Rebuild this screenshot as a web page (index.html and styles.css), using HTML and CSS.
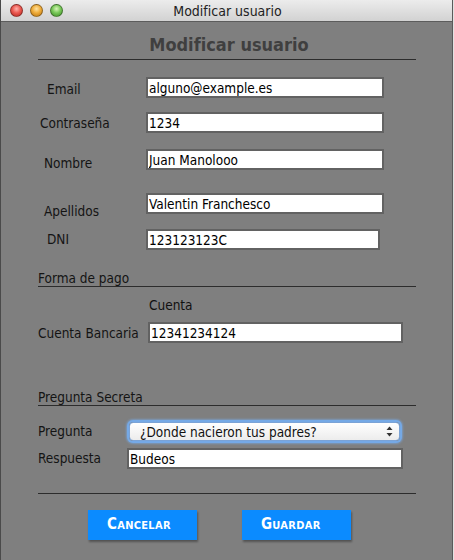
FILE: index.html
```html
<!DOCTYPE html>
<html lang="es">
<head>
  <meta charset="UTF-8">
  <title>Modificar usuario</title>
  <link rel="stylesheet" href="styles.css">
</head>
<body>
  <div class="window">
    <!-- Title bar -->
    <div class="titlebar">
      <div class="lights">
        <span class="light light-close"></span>
        <span class="light light-min"></span>
        <span class="light light-max"></span>
      </div>
      <div class="titlebar-text">Modificar usuario</div>
    </div>

    <div class="form">
      <h1>Modificar usuario</h1>

      <div class="row row-email">
        <label class="lbl lbl-email">Email</label>
        <input class="field" type="text" value="alguno@example.es">
      </div>
      <div class="row row-pass">
        <label class="lbl lbl-pass">Contraseña</label>
        <input class="field" type="text" value="1234">
      </div>
      <div class="row row-nombre">
        <label class="lbl lbl-nombre">Nombre</label>
        <input class="field" type="text" value="Juan Manolooo">
      </div>
      <div class="row row-apellidos">
        <label class="lbl lbl-apellidos">Apellidos</label>
        <input class="field" type="text" value="Valentin Franchesco">
      </div>
      <div class="row row-dni">
        <label class="lbl lbl-dni">DNI</label>
        <input class="field field-dni" type="text" value="123123123C">
      </div>

      <!-- Forma de pago -->
      <div class="section section-pago"><u>Forma de pago</u></div>
      <div class="subtitle">Cuenta</div>
      <div class="row row-cuenta">
        <label class="lbl lbl-cuenta">Cuenta Bancaria</label>
        <input class="field field-cuenta" type="text" value="12341234124">
      </div>

      <!-- Pregunta secreta -->
      <div class="section section-pregunta"><u>Pregunta Secreta</u></div>
      <div class="row row-pregunta">
        <label class="lbl lbl-pregunta">Pregunta</label>
        <div class="select">
          <span>¿Donde nacieron tus padres?</span>
          <svg class="select-arrows" width="7" height="11" viewBox="0 0 7 11">
            <path d="M3.5 0.5 L6.5 4 L0.5 4 Z" fill="#333"/>
            <path d="M0.5 7 L6.5 7 L3.5 10.5 Z" fill="#333"/>
          </svg>
        </div>
      </div>
      <div class="row row-respuesta">
        <label class="lbl lbl-respuesta">Respuesta</label>
        <input class="field field-respuesta" type="text" value="Budeos">
      </div>

      <div class="separator"></div>

      <div class="buttons">
        <button class="btn">Cancelar</button>
        <button class="btn btn-guardar">Guardar</button>
      </div>
    </div>
  </div>
</body>
</html>
```

FILE: styles.css
```css
/* General */
* {
  box-sizing: border-box;
}

html, body {
  margin: 0;
  padding: 0;
  background-color: #e2e2e2;
}

body {
  font-family: "DejaVu Sans Condensed", "DejaVu Sans", sans-serif;
  font-size: 13px;
  color: #111;
}

.window {
  width: 453px;
  height: 560px;
  background-color: #7f7f7f;
  border-left: 1px solid #4a4a4a;
  border-right: 1px solid #5a5a5a;
}

/* Title bar */
.titlebar {
  height: 22px;
  display: flex;
  align-items: center;
  background: linear-gradient(#ececec, #d2d2d2);
  border-bottom: 1px solid #5c5c5c;
  position: relative;
}

.lights {
  display: flex;
  gap: 7px;
  padding-left: 9px;
  position: absolute;
  top: 4px;
  left: 0;
}

.light {
  width: 13px;
  height: 13px;
  border-radius: 50%;
  border: 1px solid rgba(0, 0, 0, 0.35);
}

.light-close {
  background: radial-gradient(circle at 50% 35%, #ffb3ad 0%, #ec5a52 45%, #b3241d 100%);
}

.light-min {
  background: radial-gradient(circle at 50% 35%, #ffe3a0 0%, #efad3b 45%, #b8720e 100%);
}

.light-max {
  background: radial-gradient(circle at 50% 35%, #d8f5b8 0%, #79c95a 45%, #3e8a25 100%);
}

.titlebar-text {
  flex: 1;
  text-align: center;
  font-size: 14px;
  color: #222;
  padding-left: 2px;
}

/* Form */
.form {
  padding: 0 36px 0 37px;
}

h1 {
  margin: 0;
  padding-top: 12px;
  padding-bottom: 3px;
  line-height: 22px;
  font-size: 18px;
  font-weight: bold;
  text-align: center;
  color: #3f3f3f;
  border-bottom: 1px solid #2c2c2c;
  padding-left: 4px;
}

.row {
  display: flex;
  align-items: flex-start;
  height: 21px;
}

.lbl {
  line-height: 21px;
  height: 21px;
  width: 108px;
  flex-shrink: 0;
  font-size: 13.5px;
  color: #141414;
  white-space: nowrap;
}

.field {
  width: 238px;
  height: 21px;
  border: 2px solid #626262;
  background-color: #fff;
  padding: 0 1px;
  font-family: inherit;
  font-size: 13.5px;
  color: #000;
  outline: none;
}

.row-email { margin-top: 17px; }
.row-pass { margin-top: 14px; }
.row-nombre { margin-top: 16px; }
.row-apellidos { margin-top: 23px; }
.row-dni { margin-top: 15px; }

.lbl-email { padding: 2px 0 0 9px; }
.lbl-pass { padding: 1px 0 0 2px; }
.lbl-nombre { padding: 4px 0 0 6px; }
.lbl-apellidos { padding: 8px 0 0 6px; }
.lbl-dni { padding: 0 0 0 9px; }

.field-dni { width: 234px; }

/* Section titles */
.section {
  line-height: 15px;
  height: 17px;
  padding-top: 1px;
  border-bottom: 1px solid #2c2c2c;
  font-size: 13.5px;
  color: #141414;
}

.section u {
  text-decoration: none;
}

.section-pago { margin-top: 20px; }
.section-pregunta { margin-top: 46px; }

.subtitle {
  margin-top: 10px;
  padding-left: 111px;
  line-height: 16px;
  font-size: 13.5px;
}

.row-cuenta { margin-top: 9px; }
.lbl-cuenta { width: 110px; padding-top: 1px; }
.field-cuenta { width: 255px; }

.row-pregunta { margin-top: 16px; height: 19px; }
.lbl-pregunta { width: 91px; line-height: 19px; height: 19px; }

.select {
  width: 271px;
  height: 19px;
  display: flex;
  align-items: center;
  justify-content: space-between;
  padding: 0 6px 0 10px;
  background: linear-gradient(#ffffff, #ececec);
  border: 1px solid #7ba3d6;
  border-radius: 4px;
  box-shadow: 0 0 0 2px #75a9e6, 0 0 2px 3px rgba(120, 170, 230, 0.6);
  font-size: 13.5px;
  color: #111;
}

.row-respuesta { margin-top: 7px; }
.lbl-respuesta { width: 89px; }
.field-respuesta { width: 276px; }

.separator {
  margin-top: 24px;
  border-bottom: 1px solid #2c2c2c;
}

/* Buttons */
.buttons {
  display: flex;
  gap: 45px;
  margin-top: 16px;
  padding-left: 50px;
}

.btn {
  width: 109px;
  height: 30px;
  border: none;
  background-color: #0b8bff;
  color: #fff;
  font-family: "DejaVu Sans Condensed", "DejaVu Sans", sans-serif;
  font-size: 15px;
  font-weight: bold;
  font-variant: small-caps;
  letter-spacing: 0.3px;
  text-align: left;
  padding: 0 0 2px 19px;
  box-shadow: 1px 2px 2px rgba(0, 0, 0, 0.35);
}
```
